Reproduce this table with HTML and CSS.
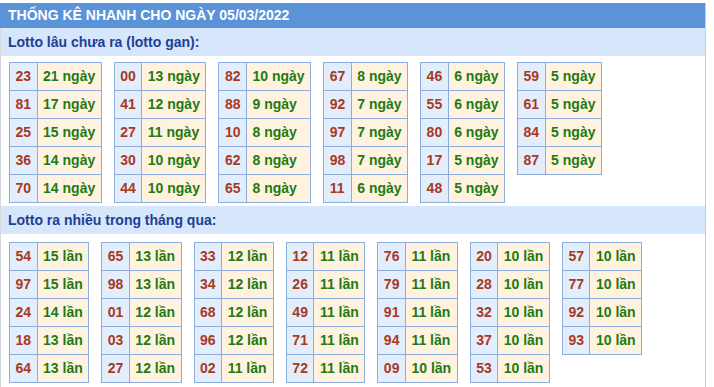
FILE: index.html
```html
<!DOCTYPE html>
<html lang="vi">
<head>
<meta charset="utf-8">
<link rel="stylesheet" href="styles.css">
</head>
<body>
<div class="box">
  <div class="title">THỐNG KÊ NHANH CHO NGÀY 05/03/2022</div>
  <div class="sub">Lotto lâu chưa ra (lotto gan):</div>
  <div class="group gan">
    <table><tr><td class="n">23</td><td class="v">21 ngày</td></tr><tr><td class="n">81</td><td class="v">17 ngày</td></tr><tr><td class="n">25</td><td class="v">15 ngày</td></tr><tr><td class="n">36</td><td class="v">14 ngày</td></tr><tr><td class="n">70</td><td class="v">14 ngày</td></tr></table>
    <table><tr><td class="n">00</td><td class="v">13 ngày</td></tr><tr><td class="n">41</td><td class="v">12 ngày</td></tr><tr><td class="n">27</td><td class="v">11 ngày</td></tr><tr><td class="n">30</td><td class="v">10 ngày</td></tr><tr><td class="n">44</td><td class="v">10 ngày</td></tr></table>
    <table><tr><td class="n">82</td><td class="v">10 ngày</td></tr><tr><td class="n">88</td><td class="v">9 ngày</td></tr><tr><td class="n">10</td><td class="v">8 ngày</td></tr><tr><td class="n">62</td><td class="v">8 ngày</td></tr><tr><td class="n">65</td><td class="v">8 ngày</td></tr></table>
    <table><tr><td class="n">67</td><td class="v">8 ngày</td></tr><tr><td class="n">92</td><td class="v">7 ngày</td></tr><tr><td class="n">97</td><td class="v">7 ngày</td></tr><tr><td class="n">98</td><td class="v">7 ngày</td></tr><tr><td class="n">11</td><td class="v">6 ngày</td></tr></table>
    <table><tr><td class="n">46</td><td class="v">6 ngày</td></tr><tr><td class="n">55</td><td class="v">6 ngày</td></tr><tr><td class="n">80</td><td class="v">6 ngày</td></tr><tr><td class="n">17</td><td class="v">5 ngày</td></tr><tr><td class="n">48</td><td class="v">5 ngày</td></tr></table>
    <table><tr><td class="n">59</td><td class="v">5 ngày</td></tr><tr><td class="n">61</td><td class="v">5 ngày</td></tr><tr><td class="n">84</td><td class="v">5 ngày</td></tr><tr><td class="n">87</td><td class="v">5 ngày</td></tr></table>
  </div>
  <div class="sub">Lotto ra nhiều trong tháng qua:</div>
  <div class="group nhieu">
    <table><tr><td class="n">54</td><td class="v">15 lần</td></tr><tr><td class="n">97</td><td class="v">15 lần</td></tr><tr><td class="n">24</td><td class="v">14 lần</td></tr><tr><td class="n">18</td><td class="v">13 lần</td></tr><tr><td class="n">64</td><td class="v">13 lần</td></tr></table>
    <table><tr><td class="n">65</td><td class="v">13 lần</td></tr><tr><td class="n">98</td><td class="v">13 lần</td></tr><tr><td class="n">01</td><td class="v">12 lần</td></tr><tr><td class="n">03</td><td class="v">12 lần</td></tr><tr><td class="n">27</td><td class="v">12 lần</td></tr></table>
    <table><tr><td class="n">33</td><td class="v">12 lần</td></tr><tr><td class="n">34</td><td class="v">12 lần</td></tr><tr><td class="n">68</td><td class="v">12 lần</td></tr><tr><td class="n">96</td><td class="v">12 lần</td></tr><tr><td class="n">02</td><td class="v">11 lần</td></tr></table>
    <table><tr><td class="n">12</td><td class="v">11 lần</td></tr><tr><td class="n">26</td><td class="v">11 lần</td></tr><tr><td class="n">49</td><td class="v">11 lần</td></tr><tr><td class="n">71</td><td class="v">11 lần</td></tr><tr><td class="n">72</td><td class="v">11 lần</td></tr></table>
    <table><tr><td class="n">76</td><td class="v">11 lần</td></tr><tr><td class="n">79</td><td class="v">11 lần</td></tr><tr><td class="n">91</td><td class="v">11 lần</td></tr><tr><td class="n">94</td><td class="v">11 lần</td></tr><tr><td class="n">09</td><td class="v">10 lần</td></tr></table>
    <table><tr><td class="n">20</td><td class="v">10 lần</td></tr><tr><td class="n">28</td><td class="v">10 lần</td></tr><tr><td class="n">32</td><td class="v">10 lần</td></tr><tr><td class="n">37</td><td class="v">10 lần</td></tr><tr><td class="n">53</td><td class="v">10 lần</td></tr></table>
    <table><tr><td class="n">57</td><td class="v">10 lần</td></tr><tr><td class="n">77</td><td class="v">10 lần</td></tr><tr><td class="n">92</td><td class="v">10 lần</td></tr><tr><td class="n">93</td><td class="v">10 lần</td></tr></table>
  </div>
</div>
</body>
</html>
```
FILE: styles.css
```css
html, body {
  margin: 0;
  padding: 0;
  background: #fff;
}
body {
  padding-top: 3px;
  font-family: "Liberation Sans", Arial, sans-serif;
}
.box {
  width: 706px;
  min-height: 384px;
  box-sizing: border-box;
  border-right: 1px solid #c9ccd1;
  border-left: 1px solid #d5d8dc;
}
.title {
  background: #5b93d9;
  color: #fff;
  font-weight: bold;
  font-size: 14px;
  height: 25px;
  line-height: 25px;
  padding-left: 8px;
  margin-left: -1px;
}
.sub {
  background: #d6e6fb;
  color: #1d3f95;
  font-weight: bold;
  font-size: 14px;
  height: 28px;
  line-height: 28px;
  padding-left: 7px;
}
.group {
  display: flex;
  align-items: flex-start;
  gap: 12px;
  padding-left: 8px;
}
.gan {
  padding-top: 6px;
  padding-bottom: 3px;
}
.nhieu {
  padding-top: 8px;
}
table {
  border-collapse: collapse;
}
td {
  border: 1px solid #8eaddf;
  padding: 5px 5.5px;
  line-height: 17px;
  font-size: 14px;
  font-weight: bold;
  white-space: nowrap;
}
td.n {
  background: #e3eefc;
  color: #a8391f;
}
td.v {
  background: #fff3e0;
  color: #1f7a12;
}
```
